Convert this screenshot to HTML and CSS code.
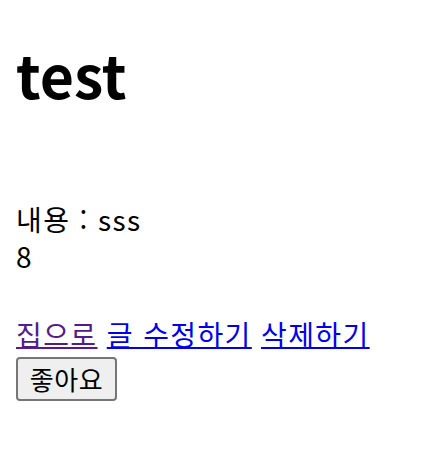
FILE: index.html
```html
<!DOCTYPE html>
<html lang="ko">
<head>
<meta charset="utf-8">
<link rel="stylesheet" href="styles.css">
</head>
<body>
<h1 class="title">test</h1>
<div class="content">
  <div class="line">내용 : sss</div>
  <div class="line">8</div>
</div>
<div class="links">
  <a class="link visited" href="#">집으로</a>
  <a class="link" href="#">글 수정하기</a>
  <a class="link" href="#">삭제하기</a>
</div>
<button class="like" type="button">좋아요</button>
</body>
</html>
```
FILE: styles.css
```css
html, body {
  margin: 0;
  padding: 0;
  background: #fff;
}
body {
  padding: 0 16px;
  font-family: "Noto Sans CJK KR", "Noto Sans", sans-serif;
  font-size: 28px;
  line-height: 41px;
  letter-spacing: 1.4px;
  color: #000;
}
.title {
  margin: 38px 0 0;
  font-size: 59px;
  line-height: 72px;
  font-weight: 700;
  letter-spacing: 0;
}
.content {
  margin-top: 89px;
}
.line {
  height: 37px;
}
.links {
  margin-top: 41px;
}
.link {
  color: #0000ee;
  text-decoration: underline;
  text-decoration-thickness: 2px;
}
.link.visited {
  color: #551a8b;
}
.like {
  display: block;
  margin-top: 2px;
  width: 101px;
  height: 44px;
  padding: 0;
  font-family: inherit;
  font-size: 26px;
  line-height: 1;
  letter-spacing: 0.5px;
  color: #000;
  background: #efefef;
  border: 2px solid #767676;
  border-radius: 4px;
}
```
